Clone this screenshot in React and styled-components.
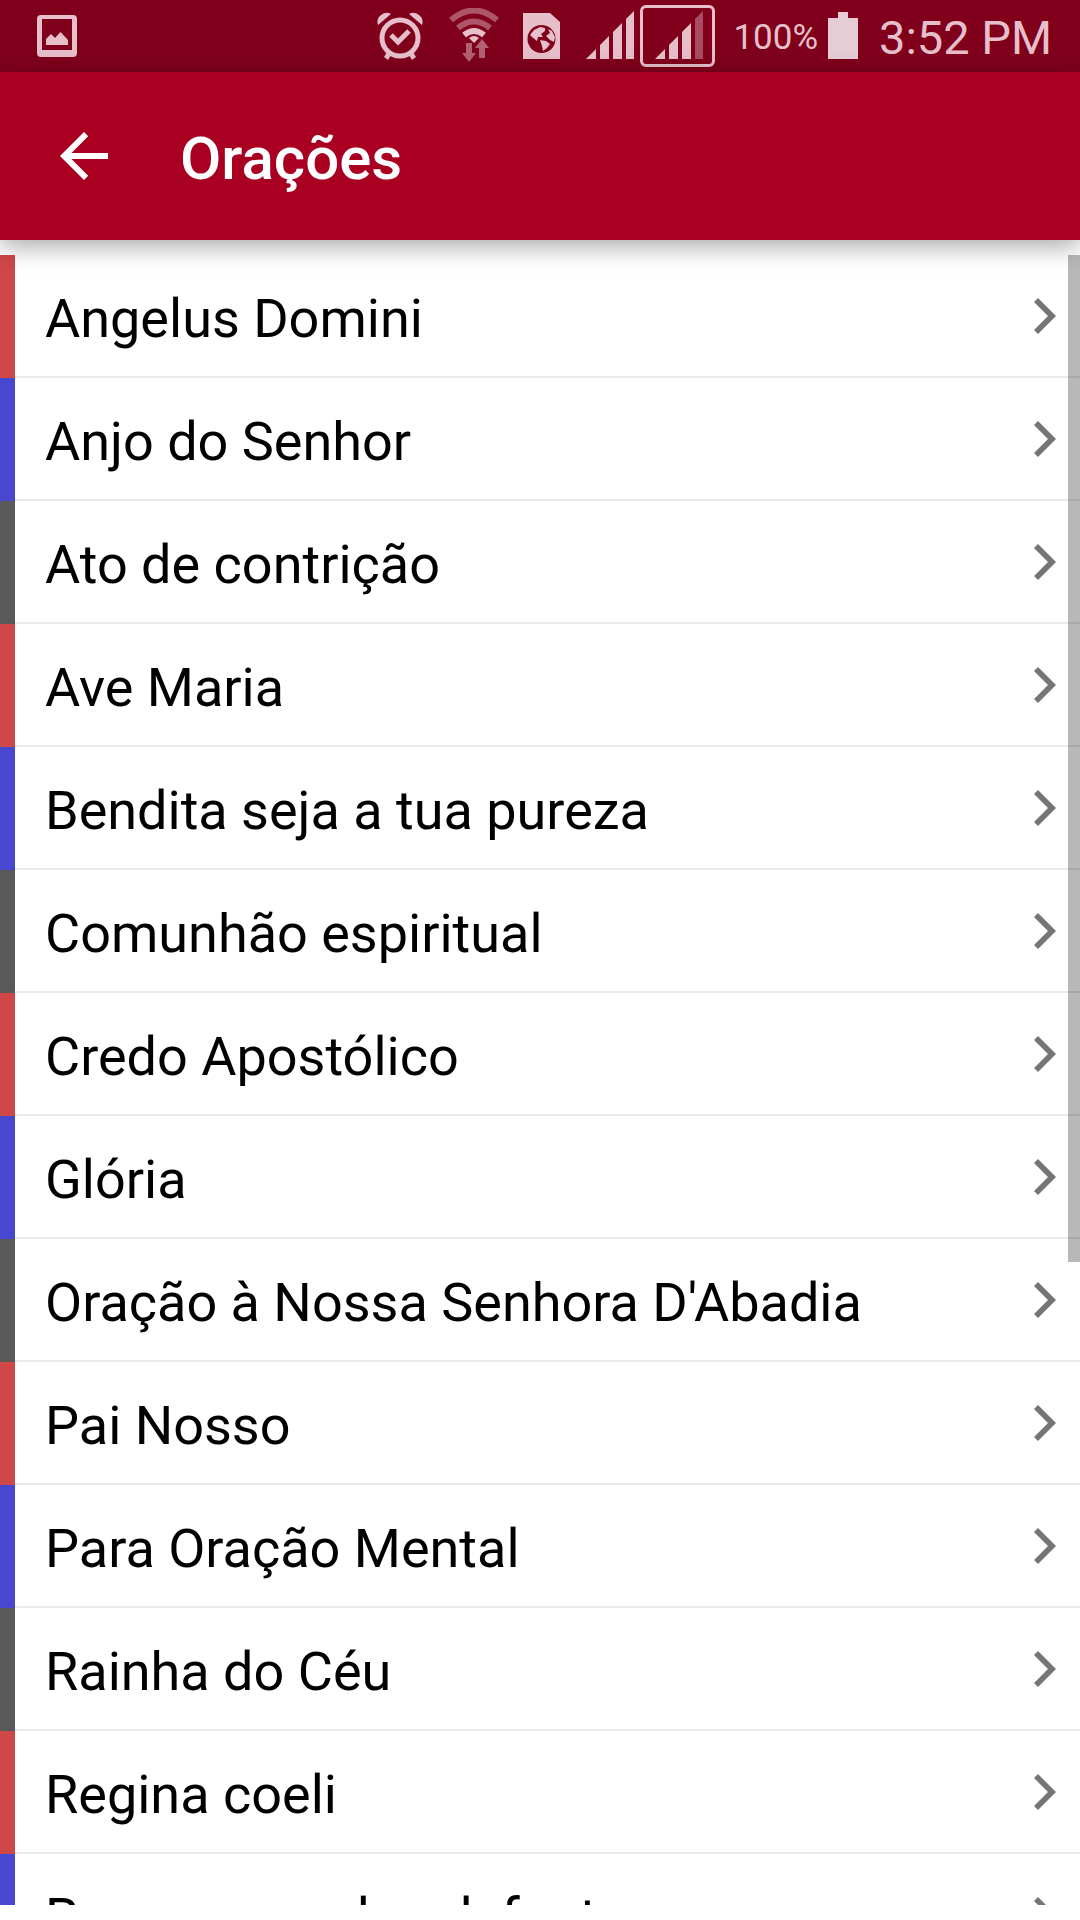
import styled, { createGlobalStyle } from "styled-components";

const prayers = [
  "Angelus Domini",
  "Anjo do Senhor",
  "Ato de contrição",
  "Ave Maria",
  "Bendita seja a tua pureza",
  "Comunhão espiritual",
  "Credo Apostólico",
  "Glória",
  "Oração à Nossa Senhora D'Abadia",
  "Pai Nosso",
  "Para Oração Mental",
  "Rainha do Céu",
  "Regina coeli",
  "Responso pelos defuntos"
];

const stripes = ["#cf4747", "#4747cf", "#595959"];

const GlobalStyle = createGlobalStyle`
  * {
    box-sizing: border-box;
  }
  body {
    margin: 0;
    background: white;
    color: black;
    font-family: Roboto, "Liberation Sans", sans-serif;
  }
`;

const Page = styled.div`
  display: flex;
  flex-direction: column;
  height: 100vh;
  overflow: hidden;
`;

const StatusBar = styled.div`
  display: flex;
  align-items: center;
  flex: none;
  height: 72px;
  padding: 0 28px 0 36px;
  background: #80001b;
  color: #e6bfca;
  svg {
    display: block;
    flex: none;
    fill: currentColor;
  }
  .spacer {
    flex: 1;
  }
`;

const StatusIcon = styled.svg`
  margin-right: ${props => props.$gap || 0}px;
`;

const Percent = styled.span`
  margin-right: 10px;
  padding-top: 4px;
  font-size: 35px;
  line-height: 42px;
`;

const Clock = styled.time`
  padding-top: 4px;
  font-size: 47px;
  line-height: 56px;
`;

const Toolbar = styled.header`
  z-index: 2;
  display: flex;
  align-items: center;
  flex: none;
  height: 168px;
  padding: 0 48px;
  background: #a90022;
  color: white;
  box-shadow: 0 6px 24px rgba(0, 0, 0, 0.35);
  h1 {
    margin: 0;
    padding-top: 6px;
    font-size: 60px;
    font-weight: 500;
    line-height: 72px;
  }
`;

const BackButton = styled.button`
  margin-right: 60px;
  padding: 12px;
  border: 0;
  background: none;
  color: inherit;
  svg {
    display: block;
    fill: currentColor;
  }
`;

const ScrollArea = styled.main`
  position: relative;
  flex: 1;
  min-height: 0;
  margin: 15px 0;
  overflow: hidden;
`;

const ScrollThumb = styled.div`
  position: absolute;
  top: 0;
  right: 0;
  width: 12px;
  height: 61%;
  background: rgba(0, 0, 0, 0.28);
`;

const List = styled.ul`
  margin: 0;
  padding: 0;
  list-style: none;
`;

const Row = styled.li`
  border-left: 15px solid ${props => props.$stripe};
  a {
    display: flex;
    align-items: center;
    justify-content: space-between;
    height: 123px;
    padding: 0 24px 0 30px;
    border-bottom: 2px solid #e9e9e9;
    color: inherit;
    text-decoration: none;
  }
  span {
    padding-top: 6px;
    font-size: 54px;
    line-height: 64px;
    white-space: nowrap;
  }
  svg {
    flex: none;
    fill: #757575;
  }
`;

const Signal = ({ gap, weak }) => (
  <StatusIcon $gap={gap} width="48" height="50" viewBox="0 0 48 50">
    <path d="M0 48L10 38V48Z" />
    <path d="M14 48V34L23 25V48Z" />
    <path d="M27 48V21L36 12V48Z" />
    <path d="M40 48V8L48 0V48Z" opacity={weak ? 0.4 : 1} />
  </StatusIcon>
);

const SimFrame = styled.div`
  display: flex;
  flex: none;
  margin-right: 18px;
  padding: 3px 9px 3px 12px;
  border: 3px solid currentColor;
  border-radius: 6px;
`;

const App = () => (
  <>
    <GlobalStyle />
    <Page>
      <StatusBar>
        <StatusIcon width="42" height="44" viewBox="0 0 42 44">
          <path
            fillRule="evenodd"
            d="M5 1H37Q41 1 41 5V39Q41 43 37 43H5Q1 43 1 39V5Q1 1 5 1ZM6 5V36H36V5Z"
          />
          <path d="M10 31V25L15 20L19 24L24.500 18L32 26V31Z" />
        </StatusIcon>
        <div className="spacer" />
        <StatusIcon $gap={26} width="46" height="50" viewBox="0 0 46 50">
          <circle cx="23" cy="27" r="18" fill="none" stroke="currentColor" strokeWidth="5" />
          <path d="M14 24L21 31L32 20" fill="none" stroke="currentColor" strokeWidth="5" />
          <path d="M1 14Q-1 8 4 4Q9 0 14 3Z" />
          <path d="M45 14Q47 8 42 4Q37 0 32 3Z" />
          <path d="M10 41L14 44L11 49L7 46ZM36 41L32 44L35 49L39 46Z" />
        </StatusIcon>
        <StatusIcon $gap={24} width="50" height="56" viewBox="0 0 50 56">
          <g fill="none" stroke="currentColor" strokeWidth="6">
            <path d="M2 12Q25 -7 48 12" opacity="0.45" />
            <path d="M9 20Q25 7 41 20" opacity="0.45" />
            <path d="M15 27Q25 19 35 27" />
          </g>
          <path d="M20 30Q25 26 30 30L25 35Z" />
          <path d="M17 35H23V45H27L20 54L13 45H17Z" opacity="0.5" />
          <path d="M30 50V40H26L33 31L40 40H36V50Z" opacity="0.5" />
        </StatusIcon>
        <StatusIcon $gap={26} width="37" height="48" viewBox="0 0 37 48">
          <path d="M0 1H27L37 10V47H0Z" />
          <circle cx="18.500" cy="27" r="14" fill="#80001b" />
          <path d="M7 23L11 18L17 15L22 16L22 19L18 22L20 25L15 25L14 29L9 25Z" />
          <path d="M17 28L23 29L27 32L24 36L20 39L19 34Z" />
          <path d="M25 17L29 19L32 25L31 30L27 28L23 24L27 21Z" />
        </StatusIcon>
        <Signal gap={6} />
        <SimFrame>
          <Signal weak />
        </SimFrame>
        <Percent>100%</Percent>
        <StatusIcon $gap={21} width="30" height="48" viewBox="0 0 30 48">
          <path d="M10 0H20V6H30V47H0V6H10Z" fill="#e6ccd4" />
        </StatusIcon>
        <Clock dateTime="15:52">3:52 PM</Clock>
      </StatusBar>
      <Toolbar>
        <BackButton type="button" aria-label="Voltar">
          <svg width="48" height="48" viewBox="0 0 48 48">
            <path d="M48 21V27H11.500L28.200 43.800L24 48L0 24L24 0L28.200 4.200L11.500 21Z" />
          </svg>
        </BackButton>
        <h1>Orações</h1>
      </Toolbar>
      <ScrollArea>
        <List>
          {prayers.map((prayer, i) => (
            <Row key={prayer} $stripe={stripes[i % stripes.length]}>
              <a href="#oracao">
                <span>{prayer}</span>
                <svg width="22" height="36" viewBox="0 0 22 36">
                  <path d="M4 0L22 18L4 36L0 32L14 18L0 4Z" />
                </svg>
              </a>
            </Row>
          ))}
        </List>
        <ScrollThumb />
      </ScrollArea>
    </Page>
  </>
);

export default App;
